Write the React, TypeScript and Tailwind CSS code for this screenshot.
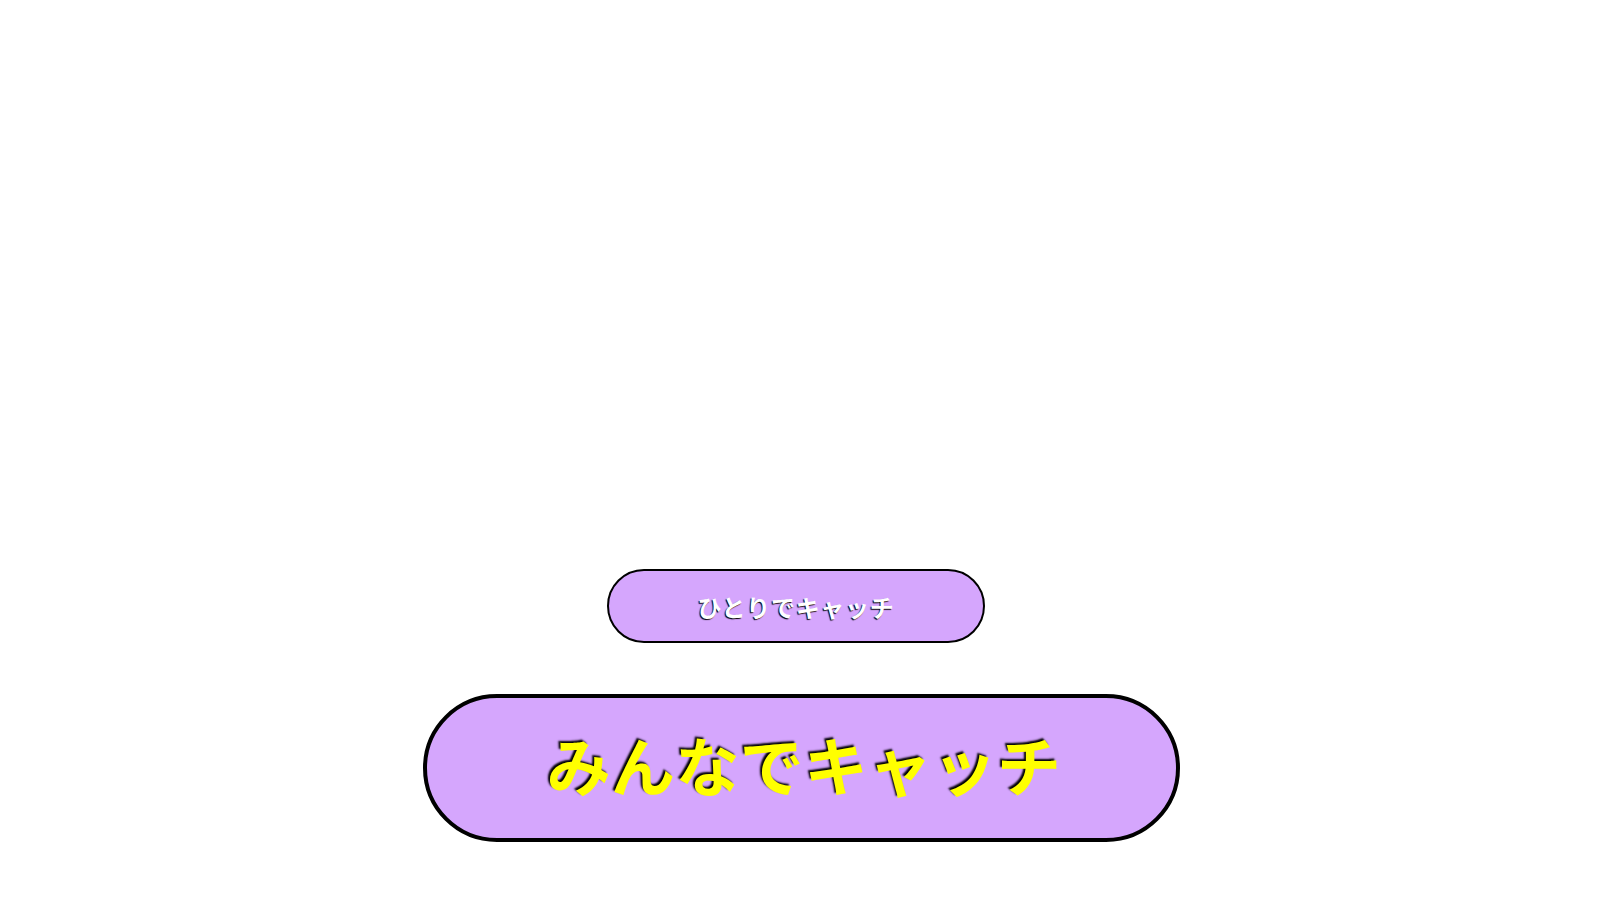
export default function App() {
  return (
    <div className="flex h-screen w-full flex-col items-center justify-end gap-[51px] bg-white pb-[58px] font-['Noto_Sans_CJK_JP','Noto_Sans',sans-serif]">
      <button className="ml-[-8px] flex h-[74px] w-[378px] items-center justify-center rounded-full border-2 border-black bg-[#d5a6fd] pt-[2px] text-[24px] font-bold tracking-[0.7px] text-white [text-shadow:-1px_1px_1px_#000]">
        ひとりでキャッチ
      </button>
      <button className="ml-[2px] flex h-[148px] w-[757px] items-center justify-center rounded-full border-4 border-black bg-[#d5a6fd] pb-[10px] pl-[6px] text-[64px] leading-none font-bold tracking-[0.3px] text-[#ffff00] [text-shadow:-2px_-2px_2px_#000]">
        みんなでキャッチ
      </button>
    </div>
  );
}
